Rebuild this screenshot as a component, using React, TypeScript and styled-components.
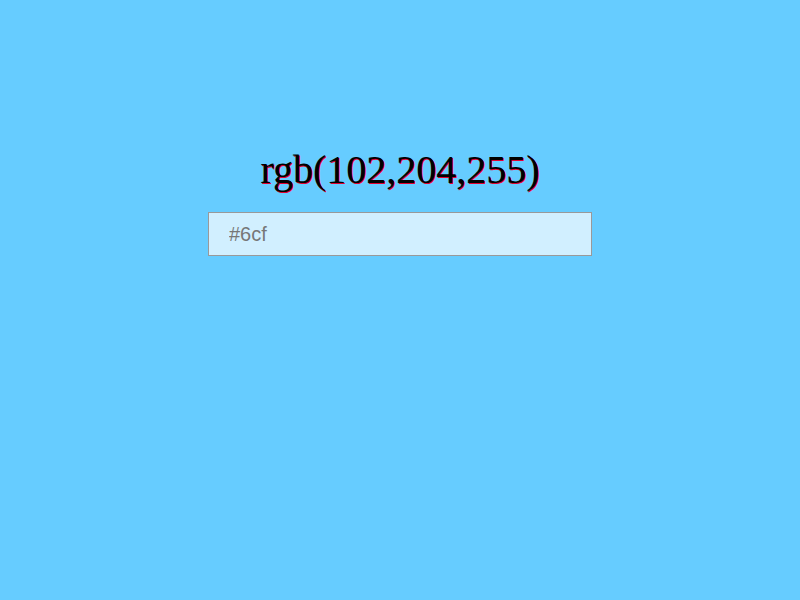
import styled, { createGlobalStyle } from "styled-components";

const GlobalStyle = createGlobalStyle`
    html, body {
        margin: 0;
        height: 100%;
    }
    body {
        background: #66ccff;
    }
`;

const Wrapper = styled.div`
    display: flex;
    flex-direction: column;
    align-items: center;
    padding-top: 146px;
`;

const Title = styled.h1`
    margin: 0 0 18px;
    font-family: "Liberation Serif", "Times New Roman", serif;
    font-weight: normal;
    font-size: 40px;
    line-height: 48px;
    color: #000;
    text-shadow: 1px 1px 0 #e00030;
`;

const ColorInput = styled.input`
    box-sizing: border-box;
    width: 384px;
    height: 44px;
    padding: 0 20px;
    border: 1px solid #999;
    background: #d1efff;
    font-family: "Liberation Sans", Arial, sans-serif;
    font-size: 20px;
    color: #777;
    outline: none;
`;

function App() {
    return (
        <>
            <GlobalStyle />
            <Wrapper>
                <Title>rgb(102,204,255)</Title>
                <ColorInput defaultValue="#6cf" />
            </Wrapper>
        </>
    );
}
export default App;
